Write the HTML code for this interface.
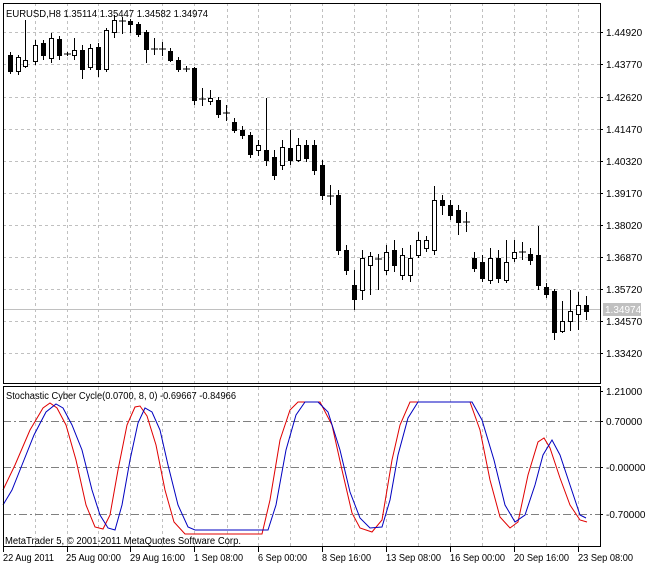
<!DOCTYPE html>
<html><head><meta charset="utf-8"><style>
html,body{margin:0;padding:0;background:#fff;}
svg{display:block;font-family:"Liberation Sans",Tahoma,sans-serif;font-size:10px;}
</style></head><body>
<svg width="653" height="569" viewBox="0 0 653 569" xmlns="http://www.w3.org/2000/svg">
<rect width="653" height="569" fill="#fff"/>
<g stroke="#c0c0c0" stroke-dasharray="3,3" stroke-width="1">
<line x1="3" x2="600" y1="32.5" y2="32.5"/><line x1="3" x2="600" y1="64.5" y2="64.5"/><line x1="3" x2="600" y1="97.5" y2="97.5"/><line x1="3" x2="600" y1="129.5" y2="129.5"/><line x1="3" x2="600" y1="161.5" y2="161.5"/><line x1="3" x2="600" y1="193.5" y2="193.5"/><line x1="3" x2="600" y1="225.5" y2="225.5"/><line x1="3" x2="600" y1="257.5" y2="257.5"/><line x1="3" x2="600" y1="289.5" y2="289.5"/><line x1="3" x2="600" y1="321.5" y2="321.5"/><line x1="3" x2="600" y1="353.5" y2="353.5"/>
<line x1="35.5" x2="35.5" y1="3" y2="547"/><line x1="67.5" x2="67.5" y1="3" y2="547"/><line x1="98.5" x2="98.5" y1="3" y2="547"/><line x1="130.5" x2="130.5" y1="3" y2="547"/><line x1="162.5" x2="162.5" y1="3" y2="547"/><line x1="194.5" x2="194.5" y1="3" y2="547"/><line x1="227.5" x2="227.5" y1="3" y2="547"/><line x1="258.5" x2="258.5" y1="3" y2="547"/><line x1="290.5" x2="290.5" y1="3" y2="547"/><line x1="322.5" x2="322.5" y1="3" y2="547"/><line x1="354.5" x2="354.5" y1="3" y2="547"/><line x1="386.5" x2="386.5" y1="3" y2="547"/><line x1="418.5" x2="418.5" y1="3" y2="547"/><line x1="450.5" x2="450.5" y1="3" y2="547"/><line x1="482.5" x2="482.5" y1="3" y2="547"/><line x1="514.5" x2="514.5" y1="3" y2="547"/><line x1="546.5" x2="546.5" y1="3" y2="547"/><line x1="578.5" x2="578.5" y1="3" y2="547"/>
</g>
<rect x="0" y="384" width="600" height="3" fill="#fff"/>
<line x1="3" x2="600" y1="309.5" y2="309.5" stroke="#c0c0c0"/>
<g stroke="#808080" stroke-dasharray="8,3,2,3">
<line x1="3" x2="600" y1="421.5" y2="421.5"/><line x1="3" x2="600" y1="467.5" y2="467.5"/><line x1="3" x2="600" y1="514.5" y2="514.5"/>
</g>
<polyline fill="none" stroke="#e00000" stroke-width="1" points="3,490 15,465 30,430 43,408 50,403 57,408 66,425 76,460 86,505 95,527 103,529 110,515 118,470 127,425 135,407 140,406 147,416 156,445 165,490 174,522 185,534 262,534 270,500 280,440 290,410 298,402 320,402 332,425 342,470 352,513 360,528 372,532 382,520 392,460 400,425 410,402 470,402 480,430 490,480 500,517 510,528 518,522 528,475 538,442 544,438 550,448 560,478 570,505 580,520 587,522"/>
<polyline fill="none" stroke="#0000c0" stroke-width="1" points="3,505 12,490 22,465 34,435 46,412 56,404 63,408 72,425 82,450 92,490 100,515 108,528 115,530 122,505 130,460 138,423 145,408 152,412 160,430 168,465 178,505 188,527 195,530 268,530 276,505 286,450 296,415 305,402 318,402 328,412 340,450 350,492 360,518 370,528 382,527 390,500 398,455 408,418 418,402 472,402 482,420 494,460 505,505 515,522 525,515 535,485 543,455 552,440 560,455 570,485 580,515 586,518"/>
<text x="6" y="17" textLength="202" lengthAdjust="spacingAndGlyphs">EURUSD,H8  1.35114 1.35447 1.34582 1.34974</text>
<text x="6" y="399" textLength="230" lengthAdjust="spacingAndGlyphs">Stochastic Cyber Cycle(0.0700, 8, 0) -0.69667 -0.84966</text>
<text x="5" y="544" textLength="236" lengthAdjust="spacingAndGlyphs">MetaTrader 5, © 2001-2011 MetaQuotes Software Corp.</text>
<g fill="none" stroke="#000">
<rect x="3.5" y="3.5" width="597" height="380"/>
<rect x="3.5" y="386.5" width="597" height="160"/>
</g>
<rect x="603" y="303" width="38" height="13" fill="#c0c0c0"/>
<g fill="#000">
<text x="606" y="36">1.44920</text><text x="606" y="68">1.43770</text><text x="606" y="101">1.42620</text><text x="606" y="133">1.41470</text><text x="606" y="165">1.40320</text><text x="606" y="197">1.39170</text><text x="606" y="229">1.38020</text><text x="606" y="261">1.36870</text><text x="606" y="293">1.35720</text><text x="606" y="325">1.34570</text><text x="606" y="357">1.33420</text>
<text x="605" y="313" fill="#fff">1.34974</text>
<text x="606" y="395">1.21000</text><text x="606" y="425">0.70000</text><text x="606" y="471">-0.00000</text><text x="606" y="518">-0.70000</text>
<text x="3" y="561" textLength="51" lengthAdjust="spacingAndGlyphs">22 Aug 2011</text><text x="66" y="561" textLength="55" lengthAdjust="spacingAndGlyphs">25 Aug 00:00</text><text x="130" y="561" textLength="55" lengthAdjust="spacingAndGlyphs">29 Aug 16:00</text><text x="194" y="561" textLength="49" lengthAdjust="spacingAndGlyphs">1 Sep 08:00</text><text x="258" y="561" textLength="49" lengthAdjust="spacingAndGlyphs">6 Sep 00:00</text><text x="322" y="561" textLength="49" lengthAdjust="spacingAndGlyphs">8 Sep 16:00</text><text x="386" y="561" textLength="55" lengthAdjust="spacingAndGlyphs">13 Sep 08:00</text><text x="450" y="561" textLength="55" lengthAdjust="spacingAndGlyphs">16 Sep 00:00</text><text x="514" y="561" textLength="55" lengthAdjust="spacingAndGlyphs">20 Sep 16:00</text><text x="578" y="561" textLength="55" lengthAdjust="spacingAndGlyphs">23 Sep 08:00</text>
</g>
<g stroke="#000">
<line x1="600" x2="603" y1="32.5" y2="32.5"/><line x1="600" x2="603" y1="64.5" y2="64.5"/><line x1="600" x2="603" y1="97.5" y2="97.5"/><line x1="600" x2="603" y1="129.5" y2="129.5"/><line x1="600" x2="603" y1="161.5" y2="161.5"/><line x1="600" x2="603" y1="193.5" y2="193.5"/><line x1="600" x2="603" y1="225.5" y2="225.5"/><line x1="600" x2="603" y1="257.5" y2="257.5"/><line x1="600" x2="603" y1="289.5" y2="289.5"/><line x1="600" x2="603" y1="321.5" y2="321.5"/><line x1="600" x2="603" y1="353.5" y2="353.5"/>
<line x1="600" x2="603" y1="391.5" y2="391.5"/><line x1="600" x2="603" y1="421.5" y2="421.5"/><line x1="600" x2="603" y1="467.5" y2="467.5"/><line x1="600" x2="603" y1="514.5" y2="514.5"/>
<line x1="3.5" x2="3.5" y1="547" y2="552"/><line x1="67.5" x2="67.5" y1="547" y2="552"/><line x1="130.5" x2="130.5" y1="547" y2="552"/><line x1="194.5" x2="194.5" y1="547" y2="552"/><line x1="258.5" x2="258.5" y1="547" y2="552"/><line x1="322.5" x2="322.5" y1="547" y2="552"/><line x1="386.5" x2="386.5" y1="547" y2="552"/><line x1="450.5" x2="450.5" y1="547" y2="552"/><line x1="514.5" x2="514.5" y1="547" y2="552"/><line x1="578.5" x2="578.5" y1="547" y2="552"/>
</g>
<g stroke="#000" stroke-width="1">
<line x1="10.5" x2="10.5" y1="52" y2="74"/><rect x="8.5" y="55.5" width="4" height="16" fill="#000"/>
<line x1="18.5" x2="18.5" y1="55" y2="75"/><rect x="16.5" y="57.5" width="4" height="14" fill="#fff"/>
<line x1="25.5" x2="25.5" y1="20" y2="68"/><rect x="23.5" y="60.5" width="4" height="6" fill="#fff"/>
<line x1="35.5" x2="35.5" y1="40" y2="65"/><rect x="33.5" y="45.5" width="4" height="16" fill="#fff"/>
<line x1="43.5" x2="43.5" y1="40" y2="60"/><rect x="41.5" y="43.5" width="4" height="12" fill="#000"/>
<line x1="51.5" x2="51.5" y1="33" y2="63"/><rect x="49.5" y="38.5" width="4" height="20" fill="#fff"/>
<line x1="59.5" x2="59.5" y1="36" y2="60"/><rect x="57.5" y="39.5" width="4" height="16" fill="#000"/>
<line x1="67.5" x2="67.5" y1="52" y2="56"/><line x1="64" x2="71" y1="54" y2="54"/>
<line x1="74.5" x2="74.5" y1="38" y2="60"/><rect x="72.5" y="50.5" width="4" height="5" fill="#fff"/>
<line x1="82.5" x2="82.5" y1="45" y2="79"/><rect x="80.5" y="50.5" width="4" height="19" fill="#000"/>
<line x1="90.5" x2="90.5" y1="44" y2="70"/><rect x="88.5" y="48.5" width="4" height="19" fill="#fff"/>
<line x1="98.5" x2="98.5" y1="43" y2="77"/><rect x="96.5" y="47.5" width="4" height="22" fill="#000"/>
<line x1="106.5" x2="106.5" y1="28" y2="72"/><rect x="104.5" y="30.5" width="4" height="39" fill="#fff"/>
<line x1="114.5" x2="114.5" y1="15" y2="38"/><rect x="112.5" y="20.5" width="4" height="12" fill="#fff"/>
<line x1="122.5" x2="122.5" y1="17" y2="34"/><line x1="119" x2="126" y1="21" y2="21"/>
<line x1="130.5" x2="130.5" y1="19" y2="33"/><rect x="128.5" y="21.5" width="4" height="3" fill="#000"/>
<line x1="138.5" x2="138.5" y1="22" y2="37"/><rect x="136.5" y="24.5" width="4" height="10" fill="#000"/>
<line x1="146.5" x2="146.5" y1="30" y2="63"/><rect x="144.5" y="32.5" width="4" height="17" fill="#000"/>
<line x1="154.5" x2="154.5" y1="38" y2="55"/><line x1="151" x2="158" y1="49" y2="49"/>
<line x1="162.5" x2="162.5" y1="42" y2="56"/><line x1="159" x2="166" y1="49" y2="49"/>
<line x1="170.5" x2="170.5" y1="48" y2="62"/><rect x="168.5" y="51.5" width="4" height="9" fill="#000"/>
<line x1="178.5" x2="178.5" y1="57" y2="72"/><rect x="176.5" y="60.5" width="4" height="9" fill="#000"/>
<line x1="186.5" x2="186.5" y1="66" y2="72"/><line x1="183" x2="190" y1="69" y2="69"/>
<line x1="194.5" x2="194.5" y1="67" y2="105"/><rect x="192.5" y="68.5" width="4" height="32" fill="#000"/>
<line x1="202.5" x2="202.5" y1="88" y2="106"/><line x1="199" x2="206" y1="99" y2="99"/>
<line x1="210.5" x2="210.5" y1="90" y2="105"/><rect x="208.5" y="98.5" width="4" height="3" fill="#fff"/>
<line x1="218.5" x2="218.5" y1="97" y2="118"/><rect x="216.5" y="100.5" width="4" height="14" fill="#000"/>
<line x1="226.5" x2="226.5" y1="105" y2="121"/><line x1="223" x2="230" y1="113" y2="113"/>
<line x1="234.5" x2="234.5" y1="118" y2="133"/><rect x="232.5" y="122.5" width="4" height="8" fill="#000"/>
<line x1="242.5" x2="242.5" y1="126" y2="139"/><rect x="240.5" y="130.5" width="4" height="5" fill="#000"/>
<line x1="250.5" x2="250.5" y1="132" y2="158"/><rect x="248.5" y="135.5" width="4" height="19" fill="#000"/>
<line x1="258.5" x2="258.5" y1="140" y2="156"/><rect x="256.5" y="145.5" width="4" height="5" fill="#fff"/>
<line x1="266.5" x2="266.5" y1="98" y2="166"/><rect x="264.5" y="150.5" width="4" height="10" fill="#000"/>
<line x1="274.5" x2="274.5" y1="150" y2="180"/><rect x="272.5" y="157.5" width="4" height="18" fill="#000"/>
<line x1="282.5" x2="282.5" y1="140" y2="170"/><rect x="280.5" y="147.5" width="4" height="18" fill="#fff"/>
<line x1="290.5" x2="290.5" y1="130" y2="165"/><rect x="288.5" y="148.5" width="4" height="12" fill="#000"/>
<line x1="298.5" x2="298.5" y1="138" y2="162"/><rect x="296.5" y="145.5" width="4" height="15" fill="#fff"/>
<line x1="306.5" x2="306.5" y1="140" y2="162"/><rect x="304.5" y="145.5" width="4" height="13" fill="#000"/>
<line x1="314.5" x2="314.5" y1="140" y2="175"/><rect x="312.5" y="145.5" width="4" height="25" fill="#000"/>
<line x1="322.5" x2="322.5" y1="160" y2="200"/><rect x="320.5" y="165.5" width="4" height="30" fill="#000"/>
<line x1="330.5" x2="330.5" y1="185" y2="205"/><line x1="327" x2="334" y1="196" y2="196"/>
<line x1="338.5" x2="338.5" y1="190" y2="255"/><rect x="336.5" y="195.5" width="4" height="55" fill="#000"/>
<line x1="346.5" x2="346.5" y1="245" y2="275"/><rect x="344.5" y="250.5" width="4" height="20" fill="#000"/>
<line x1="354.5" x2="354.5" y1="270" y2="310"/><rect x="352.5" y="285.5" width="4" height="14" fill="#000"/>
<line x1="362.5" x2="362.5" y1="250" y2="300"/><rect x="360.5" y="258.5" width="4" height="32" fill="#fff"/>
<line x1="370.5" x2="370.5" y1="252" y2="295"/><rect x="368.5" y="256.5" width="4" height="9" fill="#fff"/>
<line x1="378.5" x2="378.5" y1="254" y2="290"/><line x1="375" x2="382" y1="259" y2="259"/>
<line x1="386.5" x2="386.5" y1="245" y2="275"/><rect x="384.5" y="252.5" width="4" height="18" fill="#fff"/>
<line x1="394.5" x2="394.5" y1="240" y2="272"/><rect x="392.5" y="250.5" width="4" height="15" fill="#000"/>
<line x1="402.5" x2="402.5" y1="248" y2="280"/><rect x="400.5" y="255.5" width="4" height="20" fill="#fff"/>
<line x1="410.5" x2="410.5" y1="245" y2="282"/><rect x="408.5" y="258.5" width="4" height="17" fill="#fff"/>
<line x1="418.5" x2="418.5" y1="232" y2="258"/><rect x="416.5" y="240.5" width="4" height="15" fill="#fff"/>
<line x1="426.5" x2="426.5" y1="236" y2="252"/><rect x="424.5" y="240.5" width="4" height="8" fill="#fff"/>
<line x1="434.5" x2="434.5" y1="186" y2="255"/><rect x="432.5" y="200.5" width="4" height="50" fill="#fff"/>
<line x1="442.5" x2="442.5" y1="195" y2="215"/><rect x="440.5" y="200.5" width="4" height="5" fill="#000"/>
<line x1="450.5" x2="450.5" y1="200" y2="220"/><rect x="448.5" y="205.5" width="4" height="10" fill="#000"/>
<line x1="458.5" x2="458.5" y1="205" y2="235"/><rect x="456.5" y="210.5" width="4" height="12" fill="#000"/>
<line x1="466.5" x2="466.5" y1="212" y2="232"/><line x1="463" x2="470" y1="222" y2="222"/>
<line x1="474.5" x2="474.5" y1="252" y2="272"/><rect x="472.5" y="258.5" width="4" height="10" fill="#000"/>
<line x1="482.5" x2="482.5" y1="255" y2="282"/><rect x="480.5" y="262.5" width="4" height="16" fill="#000"/>
<line x1="490.5" x2="490.5" y1="248" y2="284"/><rect x="488.5" y="258.5" width="4" height="22" fill="#fff"/>
<line x1="498.5" x2="498.5" y1="250" y2="283"/><rect x="496.5" y="258.5" width="4" height="20" fill="#000"/>
<line x1="506.5" x2="506.5" y1="240" y2="283"/><rect x="504.5" y="262.5" width="4" height="18" fill="#fff"/>
<line x1="514.5" x2="514.5" y1="240" y2="262"/><rect x="512.5" y="252.5" width="4" height="6" fill="#fff"/>
<line x1="522.5" x2="522.5" y1="242" y2="260"/><line x1="519" x2="526" y1="252" y2="252"/>
<line x1="530.5" x2="530.5" y1="248" y2="265"/><rect x="528.5" y="254.5" width="4" height="6" fill="#000"/>
<line x1="538.5" x2="538.5" y1="226" y2="290"/><rect x="536.5" y="255.5" width="4" height="30" fill="#000"/>
<line x1="546.5" x2="546.5" y1="283" y2="298"/><rect x="544.5" y="287.5" width="4" height="7" fill="#000"/>
<line x1="554.5" x2="554.5" y1="289" y2="340"/><rect x="552.5" y="291.5" width="4" height="41" fill="#000"/>
<line x1="562.5" x2="562.5" y1="301" y2="333"/><rect x="560.5" y="321.5" width="4" height="10" fill="#fff"/>
<line x1="570.5" x2="570.5" y1="290" y2="331"/><rect x="568.5" y="311.5" width="4" height="10" fill="#fff"/>
<line x1="578.5" x2="578.5" y1="292" y2="330"/><rect x="576.5" y="305.5" width="4" height="9" fill="#fff"/>
<line x1="586.5" x2="586.5" y1="296" y2="320"/><rect x="584.5" y="305.5" width="4" height="6" fill="#000"/>
</g>
</svg>
</body></html>
